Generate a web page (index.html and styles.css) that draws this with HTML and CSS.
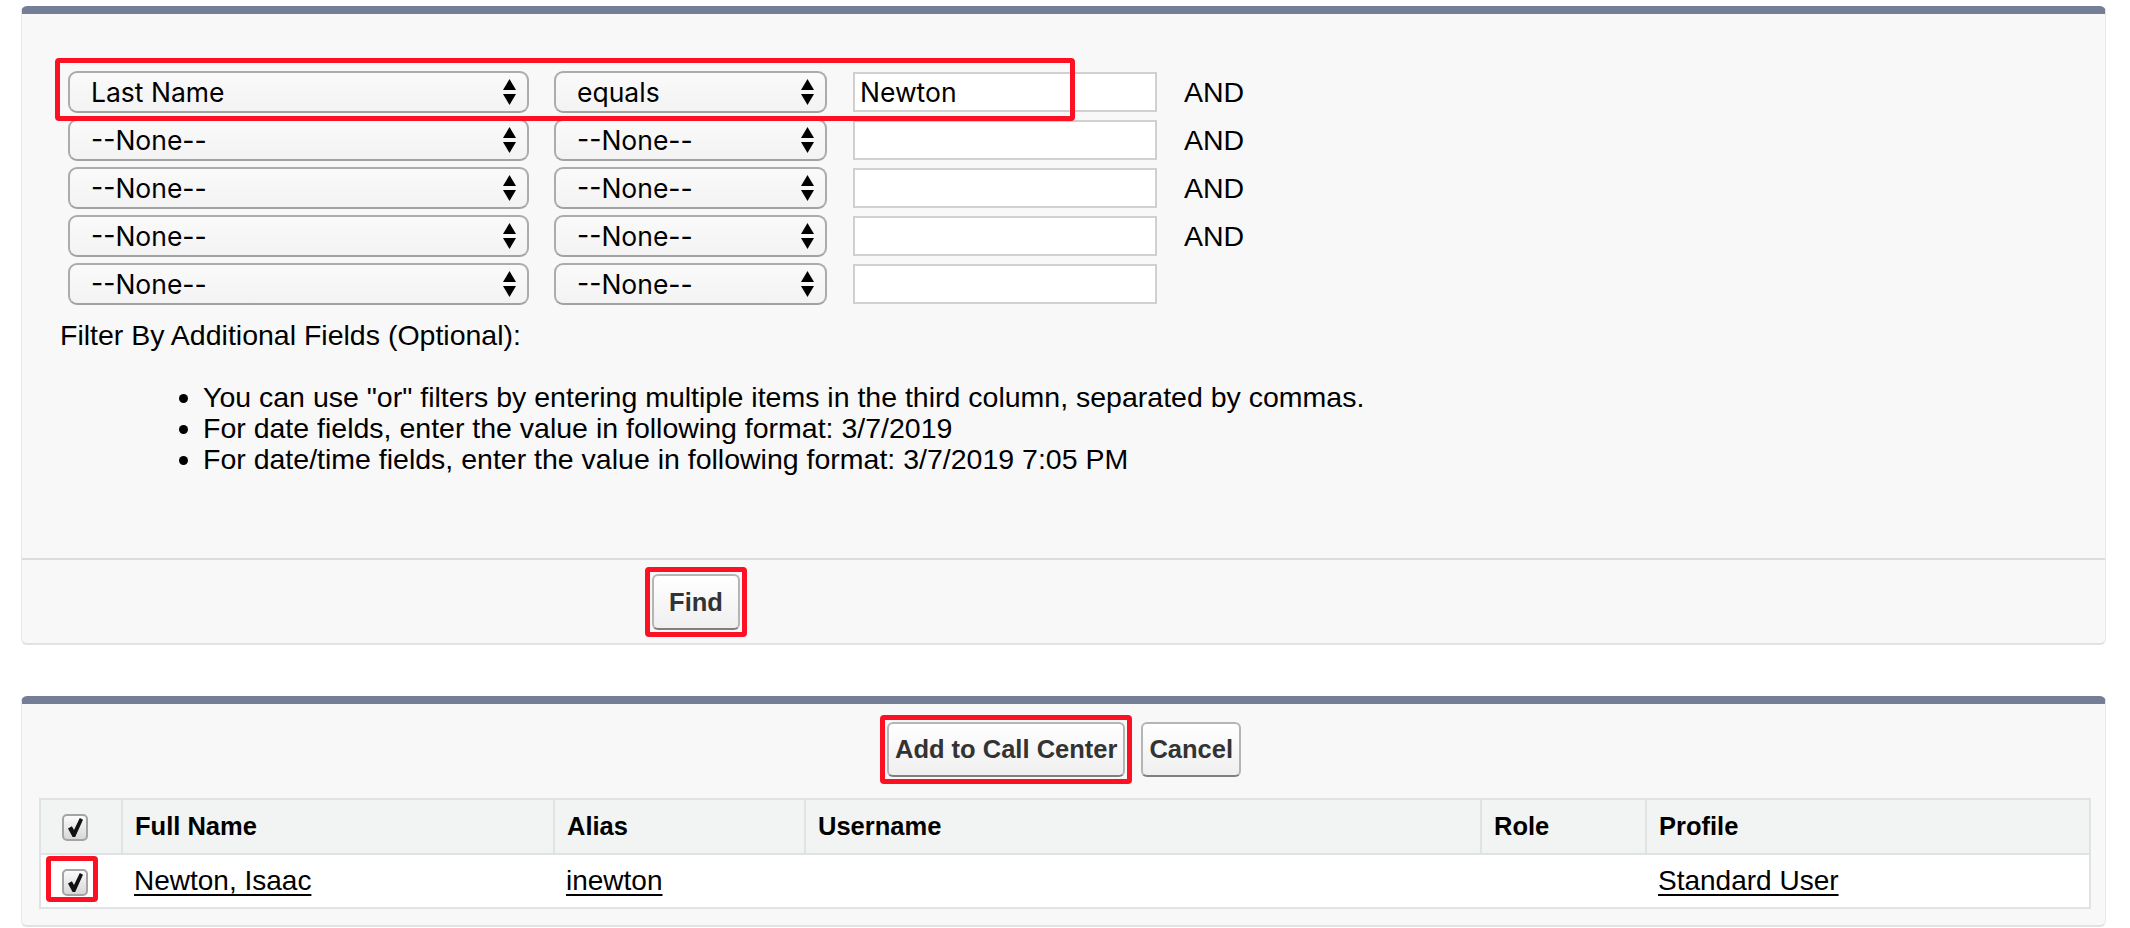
FILE: index.html
```html
<!DOCTYPE html>
<html>
  <head>
    <title>Add Users to Call Center</title>
    <link rel="stylesheet" href="styles.css">
  </head>

  <body>
    <div class="block search-block">
      <span class="callout callout-row"></span>
      <div class="criteria">
        <div class="filter-row">
          <div class="picklist field-pick">
            <span>Last Name</span>
            <svg class="arrows" width="13" height="26" viewBox="0 0 13 26"><polygon points="6.5,0 13,11 0,11"/><polygon points="0,15 13,15 6.5,26"/></svg>
          </div>
          <div class="picklist op-pick">
            <span>equals</span>
            <svg class="arrows" width="13" height="26" viewBox="0 0 13 26"><polygon points="6.5,0 13,11 0,11"/><polygon points="0,15 13,15 6.5,26"/></svg>
          </div>
          <input class="value" type="text" value="Newton">
          <span class="joiner">AND</span>
        </div>
        <div class="filter-row">
          <div class="picklist field-pick">
            <span>--None--</span>
            <svg class="arrows" width="13" height="26" viewBox="0 0 13 26"><polygon points="6.5,0 13,11 0,11"/><polygon points="0,15 13,15 6.5,26"/></svg>
          </div>
          <div class="picklist op-pick">
            <span>--None--</span>
            <svg class="arrows" width="13" height="26" viewBox="0 0 13 26"><polygon points="6.5,0 13,11 0,11"/><polygon points="0,15 13,15 6.5,26"/></svg>
          </div>
          <input class="value" type="text" value="">
          <span class="joiner">AND</span>
        </div>
        <div class="filter-row">
          <div class="picklist field-pick">
            <span>--None--</span>
            <svg class="arrows" width="13" height="26" viewBox="0 0 13 26"><polygon points="6.5,0 13,11 0,11"/><polygon points="0,15 13,15 6.5,26"/></svg>
          </div>
          <div class="picklist op-pick">
            <span>--None--</span>
            <svg class="arrows" width="13" height="26" viewBox="0 0 13 26"><polygon points="6.5,0 13,11 0,11"/><polygon points="0,15 13,15 6.5,26"/></svg>
          </div>
          <input class="value" type="text" value="">
          <span class="joiner">AND</span>
        </div>
        <div class="filter-row">
          <div class="picklist field-pick">
            <span>--None--</span>
            <svg class="arrows" width="13" height="26" viewBox="0 0 13 26"><polygon points="6.5,0 13,11 0,11"/><polygon points="0,15 13,15 6.5,26"/></svg>
          </div>
          <div class="picklist op-pick">
            <span>--None--</span>
            <svg class="arrows" width="13" height="26" viewBox="0 0 13 26"><polygon points="6.5,0 13,11 0,11"/><polygon points="0,15 13,15 6.5,26"/></svg>
          </div>
          <input class="value" type="text" value="">
          <span class="joiner">AND</span>
        </div>
        <div class="filter-row">
          <div class="picklist field-pick">
            <span>--None--</span>
            <svg class="arrows" width="13" height="26" viewBox="0 0 13 26"><polygon points="6.5,0 13,11 0,11"/><polygon points="0,15 13,15 6.5,26"/></svg>
          </div>
          <div class="picklist op-pick">
            <span>--None--</span>
            <svg class="arrows" width="13" height="26" viewBox="0 0 13 26"><polygon points="6.5,0 13,11 0,11"/><polygon points="0,15 13,15 6.5,26"/></svg>
          </div>
          <input class="value" type="text" value="">
        </div>
      </div>

      <p class="filter-label">Filter By Additional Fields (Optional):</p>
      <ul class="hints">
        <li>You can use "or" filters by entering multiple items in the third column, separated by commas.</li>
        <li>For date fields, enter the value in following format: 3/7/2019</li>
        <li>For date/time fields, enter the value in following format: 3/7/2019 7:05 PM</li>
      </ul>

      <div class="block-bottom">
        <span class="hl"><button class="btn find" type="submit">Find</button></span>
      </div>
    </div>

    <div class="block results-block">
      <span class="callout callout-check"></span>
      <div class="buttons">
        <span class="hl"><button class="btn" type="submit">Add to Call Center</button></span>
        <button class="btn" type="button">Cancel</button>
      </div>
      <table class="list">
        <colgroup>
          <col style="width: 82px">
          <col style="width: 432px">
          <col style="width: 251px">
          <col style="width: 676px">
          <col style="width: 165px">
          <col style="width: 444px">
        </colgroup>
        <tr class="header-row">
          <th class="check-col"><span class="check"><svg width="15" height="19" viewBox="0 0 15 19"><path d="M0 10.6 L3.9 8.2 L6 12 L11.8 0 L15 1.7 L7.2 19 L4.6 19 Z"/></svg></span></th>
          <th>Full Name</th>
          <th>Alias</th>
          <th>Username</th>
          <th>Role</th>
          <th>Profile</th>
        </tr>
        <tr class="data-row">
          <td class="check-col"><span class="check"><svg width="15" height="19" viewBox="0 0 15 19"><path d="M0 10.6 L3.9 8.2 L6 12 L11.8 0 L15 1.7 L7.2 19 L4.6 19 Z"/></svg></span></td>
          <td><a href="#">Newton, Isaac</a></td>
          <td><a href="#">inewton</a></td>
          <td></td>
          <td></td>
          <td><a href="#">Standard User</a></td>
        </tr>
      </table>
    </div>
  </body>
</html>
```

FILE: styles.css
```css
body {
  margin: 0;
  background: #fff;
  color: #000;
  font-family: "Liberation Sans", Arial, sans-serif;
  font-size: 28.5px;
}

/* page blocks */
.block {
  position: relative;
  margin: 0 24px 0 21px;
  background: #f8f8f8;
  border: 1px solid #e8e8e8;
  border-top: 8px solid #747e96;
  border-bottom: 2px solid #e2e2e2;
  border-radius: 6px;
}
.search-block {
  margin-top: 6px;
}
.results-block {
  margin-top: 51px;
  padding: 18px 16px 16px 17px;
}

/* red annotation boxes */
.callout {
  position: absolute;
  box-sizing: border-box;
  border: 5px solid #fc1023;
  border-radius: 4px;
}
.callout-row {
  left: 33px;
  top: 44px;
  width: 1020px;
  height: 63px;
}
.callout-check {
  left: 24px;
  top: 152px;
  width: 52px;
  height: 46px;
}
.hl {
  display: flex;
  margin: -7px;
  padding: 2px;
  border: 5px solid #fc1023;
  border-radius: 4px;
}

/* filter criteria */
.criteria {
  display: flex;
  flex-direction: column;
  gap: 6px;
  padding: 57px 0 0 46px;
}
.filter-row {
  display: flex;
  align-items: center;
  height: 42px;
}
.picklist {
  box-sizing: border-box;
  display: flex;
  align-items: center;
  justify-content: space-between;
  height: 42px;
  padding: 0 11px 0 21px;
  border: 2px solid #acacac;
  border-bottom-color: #a2a2a2;
  border-radius: 9px;
  background: linear-gradient(#fafafa, #f3f3f3);
  font-family: Inter, "Liberation Sans", sans-serif;
  font-size: 26.5px;
}
.arrows {
  fill: #000;
}
.field-pick {
  width: 461px;
  margin-right: 25px;
}
.op-pick {
  width: 273px;
  margin-right: 26px;
}
.value {
  box-sizing: border-box;
  width: 304px;
  height: 40px;
  margin: 0 27px 0 0;
  padding: 0 5px;
  border: 2px solid #d0d0d0;
  background: #fff;
  color: #000;
  font-family: Inter, "Liberation Sans", sans-serif;
  font-size: 26.5px;
}
.joiner {
  line-height: 31px;
}

.filter-label {
  margin: 15px 0 0 38px;
  line-height: 31px;
}
.hints {
  margin: 31px 0 83px;
  padding-left: 181px;
  line-height: 31px;
}

.block-bottom {
  display: flex;
  border-top: 2px solid #dcdcdc;
  padding: 14px 0 13px 630px;
}

/* buttons */
.btn {
  box-sizing: border-box;
  height: 55px;
  padding: 0 6px;
  border: 2px solid #b5b5b5;
  border-bottom-color: #7f7f7f;
  border-radius: 6px;
  background: linear-gradient(#ffffff, #efefef);
  color: #333;
  font-family: "Liberation Sans", Arial, sans-serif;
  font-size: 25.5px;
  font-weight: bold;
  cursor: pointer;
}
.find {
  width: 88px;
  height: 56px;
}
.buttons {
  display: flex;
  justify-content: center;
  gap: 16px;
}

/* results list */
.list {
  width: 2050px;
  margin-top: 21px;
  table-layout: fixed;
  border-collapse: collapse;
  border: 2px solid #e0e3e5;
  background: #fff;
}
.list th,
.list td {
  padding: 0 12px;
  text-align: left;
  white-space: nowrap;
}
.list th {
  height: 53px;
  background: #f2f3f3;
  border: 2px solid #e0e3e5;
  font-size: 25.5px;
  font-weight: bold;
}
.list td {
  height: 52px;
  border-bottom: 2px solid #e0e3e5;
  font-size: 28px;
}
.list .check-col {
  padding-left: 21px;
}
.list a {
  color: #000;
  text-decoration-thickness: 2px;
  text-underline-offset: 4px;
}

.check {
  box-sizing: border-box;
  display: inline-flex;
  align-items: center;
  justify-content: center;
  width: 26px;
  height: 27px;
  vertical-align: middle;
  border: 2px solid #a4a4a4;
  border-radius: 5px;
  background: linear-gradient(#fbfbfb, #d8d8d8);
}
.check path {
  fill: #111;
}
```
